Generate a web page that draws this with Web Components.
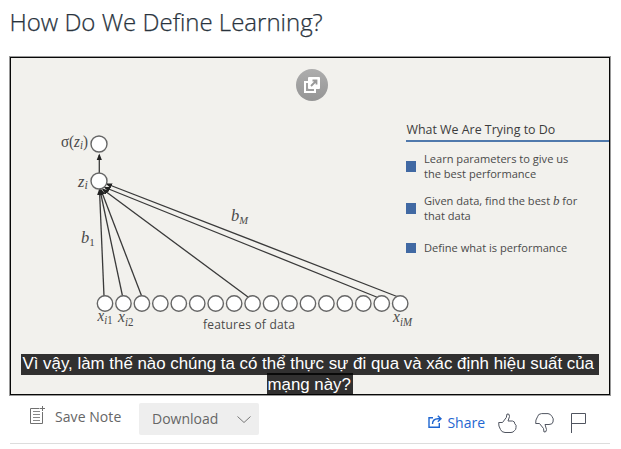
<!DOCTYPE html>
<html lang="en">
<head>
<meta charset="utf-8">
<title>How Do We Define Learning?</title>
<style>
body{margin:0;background:#fff;font-family:"Open Sans","Noto Sans",sans-serif;overflow:hidden}
</style>
</head>
<body>
<lecture-page></lecture-page>
<script>
const define = (name, html) => customElements.define(name, class extends HTMLElement {
  constructor() {
    super();
    const t = document.createElement('template');
    t.innerHTML = html;
    this.attachShadow({mode: 'open'}).append(t.content.cloneNode(true));
  }
});

const ends = [[99.5,190,104,296],[100,190,122.5,296],[101,190,142,297],[103,189.5,248,297],[105,187.5,379,298],[107,184,397,296.5]];
const rays = ends.map(([a,b,c,d]) => `<line x1="${c}" y1="${d}" x2="${a}" y2="${b}" marker-end="url(#tip)"/>`).join('');
const nodes = Array.from({length: 17}, (_, i) => `<circle cx="${105 + i * 18.45}" cy="303.5" r="7.7"/>`).join('');

define('network-diagram', `
<style>
:host{display:block;position:absolute;left:-11px;top:-58px}
svg{display:block}
.m{font-family:"Liberation Serif",serif;font-style:italic;fill:#4a4a4a}
.r{font-style:normal}
</style>
<svg width="420" height="340" viewBox="0 0 420 340">
<defs><marker id="tip" markerUnits="userSpaceOnUse" markerWidth="7" markerHeight="6" refX="5" refY="3" orient="auto"><path d="M0 .4L6.5 3L0 5.6z" fill="#222"/></marker></defs>
<g stroke="#3a3a3a" stroke-width="1.3">${rays}<line x1="99.3" y1="173" x2="99.3" y2="155" marker-end="url(#tip)"/></g>
<g fill="#fff" stroke="#666" stroke-width="1.4"><circle cx="99" cy="144" r="8"/><circle cx="99" cy="181" r="8"/>${nodes}</g>
<g class="m" font-size="16.500">
<text x="61" y="147" textLength="27" lengthAdjust="spacingAndGlyphs"><tspan class="r">σ(</tspan>z<tspan font-size="12" dy="2">i</tspan><tspan class="r" dy="-2">)</tspan></text>
<text x="78" y="187">z<tspan font-size="12" dy="2">i</tspan></text>
<text x="81" y="243">b<tspan class="r" font-size="11" dy="3">1</tspan></text>
<text x="231" y="221">b<tspan font-size="10.500" dy="3">M</tspan></text>
<text x="97.500" y="321" textLength="15" lengthAdjust="spacingAndGlyphs">x<tspan font-size="11.500" dy="3">i<tspan class="r">1</tspan></tspan></text>
<text x="118" y="322" textLength="15.500" lengthAdjust="spacingAndGlyphs">x<tspan font-size="11.500" dy="4">i<tspan class="r">2</tspan></tspan></text>
<text x="393" y="322" textLength="19" lengthAdjust="spacingAndGlyphs">x<tspan font-size="11.500" dy="4">iM</tspan></text>
</g>
<text x="203" y="329" font-family="Open Sans,sans-serif" font-size="12" fill="#4a4a4a" textLength="92">features of data</text>
</svg>`);

define('goal-item', `
<style>
:host{display:grid;grid-template-columns:11px 1fr;column-gap:7.500px;align-items:center;font-size:11.080px;line-height:15px;color:#4a4a4a;white-space:nowrap}
i{width:10.500px;height:10.500px;background:#4169a3;margin-top:1px}
</style><i></i><div><slot></slot></div>`);

define('goal-list', `
<style>
:host{display:block;position:absolute;left:394.500px;top:64px;width:203.500px}
h2{margin:0 0 9px;padding:0 0 3px 1px;font-size:12.420px;line-height:15px;font-weight:400;color:#3c3c3c;border-bottom:2px solid #5079ac}
goal-item+goal-item{margin-top:12px}
goal-item:last-child{margin-top:17px}
em{font-family:"Liberation Serif",serif;font-size:13px;line-height:10px}
</style>
<h2><span>What We Are Trying to Do</span></h2>
<goal-item>Learn parameters to give us<br>the best performance</goal-item>
<goal-item>Given data, find the best <em>b</em> for<br>that data</goal-item>
<goal-item>Define what is performance</goal-item>`);

define('popout-button', `
<style>:host{display:block;position:absolute;left:285px;top:11px;width:32px;height:32px}svg{display:block}</style>
<svg width="32" height="32" viewBox="0 0 32 32"><defs><linearGradient id="g" x2="0" y2="1"><stop stop-color="#adadad"/><stop offset="1" stop-color="#959595"/></linearGradient></defs><circle cx="16" cy="16" r="16" fill="url(#g)"/>
<path d="M12 13H9V23H19V20" fill="none" stroke="#fff" stroke-width="2"/><rect x="12" y="8" width="12" height="12" rx="1" fill="#fff"/><path d="M15 17L20 12M16.500 11.500H20.500V15.500" fill="none" stroke="#999" stroke-width="1.800"/></svg>`);

define('caption-line', `
<style>:host{display:block;box-sizing:border-box;width:var(--w);height:20.500px;padding-left:var(--p);white-space:nowrap;background:rgba(0,0,0,.8);color:#fff;font:16.870px/19px "Liberation Sans",sans-serif}</style><slot></slot>`);

define('video-frame', `
<style>
:host{display:block;position:relative;box-sizing:border-box;width:600px;height:338px;margin-left:10px;border:1px solid #080808;outline:1px solid #999;background:#f2f1ed}
.captions{position:absolute;left:10px;top:296px;width:578px;display:flex;flex-direction:column;align-items:center}
.captions caption-line+caption-line{margin-top:-2px;height:22px;line-height:23px}
</style>
<network-diagram></network-diagram><goal-list></goal-list><popout-button></popout-button>
<div class="captions" lang="vi"><caption-line style="--w:578px;--p:1.500px">Vì vậy, làm thế nào chúng ta có thể thực sự đi qua và xác định hiệu suất của</caption-line><caption-line style="--w:86px;--p:.500px">mạng này?</caption-line></div>`);

define('action-bar', `
<style>
:host{display:flex;box-sizing:border-box;height:49px;margin-left:10px;width:600px;border-bottom:1px solid #ddd;padding:8px 23px 0 19px;color:#666;font-size:14px;line-height:20px}
svg{display:block;flex:none;fill:none}
.note{margin:3px 9px 0 0}
.save{margin-top:4px;width:84px;letter-spacing:.06px}
.download{display:flex;box-sizing:border-box;width:120px;height:32px;background:#eee;border-radius:2px;padding:6px 8px 0 13px;justify-content:space-between}
.download svg{margin-top:7px}
.right{margin-left:auto;display:flex;color:#1f66d1}
.share{margin:10px 13px 0 5px}
</style>
<svg class="note" width="17" height="20" viewBox="0 0 17 20" stroke="#707070"><path d="M10.500 2.500H1.500V17.500H13.500V6"/><path d="M4 5.500H11M4 8.500H11M4 11.500H11M4 14.500H11" stroke="#888"/><path d="M13.500 0V5M11 2.500H16"/></svg>
<span class="save">Save Note</span>
<div class="download"><span>Download</span><svg width="14" height="8" viewBox="0 0 14 8" stroke="#777"><path d="M.5 .5L7 6.500L13.500 .5"/></svg></div>
<div class="right">
<svg style="margin:12px 0 0 1px" width="14" height="14" viewBox="0 0 14 14" stroke="#1f66d1" stroke-width="1.400"><path d="M5 2.700H1V12.300H11.300V8"/><path d="M4.500 9C4.500 5.500 6.500 3.700 10 3.700H13M9.800 .7L13 3.700L9.800 6.700"/></svg>
<span class="share">Share</span>
<svg style="margin:10px 18px 0 0" width="19" height="22" viewBox="0 0 19 22" stroke="#505560"><path d="M.7 9.500H4.500L8.300 4.500L9 1Q11.700 .3 11.500 3.500L10 8H14.500Q17 8.500 16.800 10.800Q18.700 12 18 14.500Q18 17 16.500 17.500Q15.500 19.500 13 19.500H7Q3.500 19.300 2.500 16.500Q.3 13 .7 9.500Z"/></svg>
<svg style="margin:10px 17px 0 0" width="19" height="22" viewBox="0 0 19 22" stroke="#505560"><path d="M.7 10.500H4.500L8.500 15.500L9 19Q11.500 19.500 11.500 16.500L10 11.500H14Q17.500 11.500 18 9Q19 5.500 17 3.500Q15.500 .7 13 .6H6.500Q3 .8 2.500 3.800Q.3 7 .7 10.500Z"/></svg>
<svg style="margin:10px 0 0" width="16" height="21" viewBox="0 0 16 21" stroke="#505560"><path d="M.5 20V.5H14.500V10.500H.5"/></svg>
</div>`);

define('lecture-page', `
<style>
:host{display:block;width:621px;height:449px}
h1{box-sizing:border-box;height:57px;margin:0;padding:6px 0 0 9.500px;font-size:24px;line-height:32px;font-weight:300;color:#29333d;-webkit-text-stroke:.25px #29333d;white-space:nowrap}
</style>
<h1><span>How Do We Define Learning?</span></h1>
<video-frame></video-frame>
<action-bar></action-bar>`);
</script>
</body>
</html>
